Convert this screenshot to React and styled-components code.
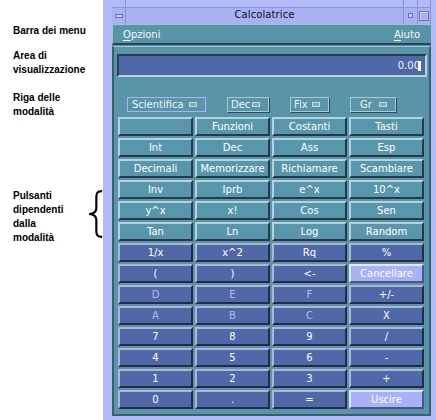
import React from "react";
import styled, { createGlobalStyle, css } from "styled-components";

const GlobalStyle = createGlobalStyle`
  body {
    margin: 0;
    background: #ffffff;
  }
`;

const Page = styled.div`
  display: flex;
  width: 436px;
  height: 420px;
  overflow: hidden;
  background: #ffffff;
`;

// annotations on the left
const Notes = styled.div`
  width: 103px;
  flex-shrink: 0;
  display: flex;
  flex-direction: column;
  padding-left: 13px;
  box-sizing: border-box;
  font-family: "Liberation Sans", Arial, sans-serif;
  font-weight: bold;
  font-size: 10px;
  line-height: 14px;
  color: #000;
`;

const Note = styled.div`
  margin-top: ${(props) => props.top}px;
`;

const BraceRow = styled.div`
  display: flex;
  align-items: flex-start;
  margin-top: ${(props) => props.top}px;
`;

const BraceText = styled.div`
  width: 75px;
  margin-top: 4px;
  flex-shrink: 0;
`;

// window
const Frame = styled.div`
  flex: 1;
  display: flex;
  flex-direction: column;
  background: #b2baf8;
  padding: 0 5px 4px 9px;
  font-family: "DejaVu Sans", Verdana, sans-serif;
  font-size: 10px;
`;

const TitleBar = styled.div`
  display: flex;
  height: 24px;
  background: linear-gradient(#b2baf8 0 7px, #8a92d4 7px 8px, #a9b1f2 8px);
`;

const TitleBox = styled.div`
  width: 14px;
  display: flex;
  align-items: center;
  justify-content: center;
  padding-top: 7px;
  box-sizing: border-box;
  border-left: ${(props) => (props.left ? "1px solid #8a92d4" : "none")};
  border-right: ${(props) => (props.right ? "1px solid #8a92d4" : "none")};
`;

const Dash = styled.span`
  width: 6px;
  height: 2px;
  border: 1px solid #6870b0;
  background: #c8ccff;
`;

const Dot = styled.span`
  width: 3px;
  height: 3px;
  border: 1px solid #6870b0;
  background: #c8ccff;
`;

const MaxSquare = styled.span`
  width: 8px;
  height: 8px;
  border: 1px solid #6870b0;
  box-shadow: inset 1px 1px 0 #d8dcff;
`;

const Title = styled.div`
  flex: 1;
  text-align: center;
  padding-top: 9px;
  color: #101020;
  font-size: 10px;
  letter-spacing: 0.1px;
`;

const Panel = styled.div`
  flex: 1;
  display: flex;
  flex-direction: column;
  background: #5994a9;
`;

const MenuBar = styled.div`
  height: 21px;
  display: flex;
  align-items: center;
  justify-content: space-between;
  padding: 0 11px 0 10px;
  box-sizing: border-box;
  border-top: 1px solid #9cc6d6;
  border-left: 1px solid #9cc6d6;
  border-bottom: 2px solid #2b4652;
  color: #f4f8fc;
`;

const MenuItem = styled.span`
  padding-top: 1px;
  & u {
    text-underline-offset: 2px;
  }
`;

const Work = styled.div`
  flex: 1;
  margin-top: 1px;
  display: flex;
  flex-direction: column;
  border-top: 1px solid #9cc6d6;
  border-left: 2px solid #35606f;
  border-right: 2px solid #35606f;
  border-bottom: 2px solid #35606f;
  padding: 7px 2px 0 3px;
`;

const Display = styled.div`
  height: 23px;
  box-sizing: border-box;
  background: #5068a8;
  border-style: solid;
  border-width: 2px;
  border-color: #2a3e4e #b6d4de #b6d4de #2a3e4e;
  display: flex;
  align-items: center;
  justify-content: flex-end;
  padding-right: 4px;
  color: #f4f6ff;
`;

const Cursor = styled.span`
  display: inline-block;
  width: 3px;
  height: 10px;
  background: #ffffff;
  margin-left: -2px;
`;

const ModeRow = styled.div`
  display: flex;
  margin-top: 20px;
  padding-left: 10px;
  gap: 21px;
`;

const Mode = styled.div`
  width: ${(props) => props.w}px;
  height: 15px;
  box-sizing: border-box;
  display: flex;
  align-items: center;
  justify-content: space-between;
  padding: 0 8px 0 ${(props) => props.pl || 3}px;
  color: #eef4f8;
  border: 1px solid ${(props) => (props.focus ? "#aab2fa" : "#a9c8d6")};
  box-shadow: ${(props) => (props.focus ? "none" : "1px 1px 0 #2f4a56")};
`;

const ModeMark = styled.span`
  width: 6px;
  height: 3px;
  border: 1px solid #c4dae4;
  background: #7ea8ba;
`;

const Keys = styled.div`
  display: grid;
  grid-template-columns: repeat(4, 75px);
  grid-auto-rows: 19px;
  column-gap: 2px;
  row-gap: 2px;
  margin-top: 5px;
  padding-left: 1px;
`;

const variants = {
  teal: css`
    background: #5a96ab;
    border-color: #b2d4e0 #253a46 #253a46 #b2d4e0;
  `,
  blue: css`
    background: #5068a8;
    border-color: #aeb6d8 #222c48 #222c48 #aeb6d8;
  `,
  lav: css`
    background: #a9b1f9;
    border-color: #e4e6ff #4c5488 #4c5488 #e4e6ff;
  `,
};

const Key = styled.button`
  appearance: none;
  margin: 0;
  padding: 0;
  box-sizing: border-box;
  border-style: solid;
  border-width: 2px;
  font-family: inherit;
  font-size: 10px;
  line-height: 12px;
  color: ${(props) => (props.dim ? "#b4bce4" : "#ffffff")};
  ${(props) => variants[props.kind]}
`;

const rows = [
  ["teal", ["", "Funzioni", "Costanti", "Tasti"]],
  ["teal", ["Int", "Dec", "Ass", "Esp"]],
  ["teal", ["Decimali", "Memorizzare", "Richiamare", "Scambiare"]],
  ["teal", ["Inv", "Iprb", "e^x", "10^x"]],
  ["teal", ["y^x", "x!", "Cos", "Sen"]],
  ["teal", ["Tan", "Ln", "Log", "Random"]],
  ["blue", ["1/x", "x^2", "Rq", "%"]],
  ["blue", ["(", ")", "<-", "Cancellare"]],
  ["blue", ["D", "E", "F", "+/-"]],
  ["blue", ["A", "B", "C", "X"]],
  ["blue", ["7", "8", "9", "/"]],
  ["blue", ["4", "5", "6", "-"]],
  ["blue", ["1", "2", "3", "+"]],
  ["blue", ["0", ".", "=", "Uscire"]],
];

const dimmed = ["A", "B", "C", "D", "E", "F"];
const light = ["Cancellare", "Uscire"];

const Brace = () => (
  <svg width="18" height="58" viewBox="0 0 18 58">
    <path
      d="M17 1.5 C11 1.5 10 4 10 9 L10 22 C10 26.5 7 28.5 1.5 29 C7 29.5 10 31.5 10 36 L10 49 C10 54 11 56.5 17 56.5"
      fill="none"
      stroke="#000"
      strokeWidth="2.6"
    />
  </svg>
);

export default function App() {
  return (
    <Page>
      <GlobalStyle />
      <Notes>
        <Note top={24}>Barra dei menu</Note>
        <Note top={11}>
          Area di
          <br />
          visualizzazione
        </Note>
        <Note top={14}>
          Riga delle
          <br />
          modalità
        </Note>
        <BraceRow top={66}>
          <BraceText>
            Pulsanti
            <br />
            dipendenti
            <br />
            dalla
            <br />
            modalità
          </BraceText>
          <Brace />
        </BraceRow>
      </Notes>

      <Frame>
        <TitleBar>
          <TitleBox right>
            <Dash />
          </TitleBox>
          <Title>Calcolatrice</Title>
          <TitleBox left>
            <Dot />
          </TitleBox>
          <TitleBox left right>
            <MaxSquare />
          </TitleBox>
        </TitleBar>
        <Panel>
          <MenuBar>
            <MenuItem>
              <u>O</u>pzioni
            </MenuItem>
            <MenuItem>
              <u>A</u>iuto
            </MenuItem>
          </MenuBar>
          <Work>
            <Display>
              0.00
              <Cursor />
            </Display>
            <ModeRow>
              <Mode w={79} pl={4} focus>
                Scientifica <ModeMark />
              </Mode>
              <Mode w={42}>
                Dec <ModeMark />
              </Mode>
              <Mode w={39}>
                Fix <ModeMark />
              </Mode>
              <Mode w={46} pl={9}>
                Gr <ModeMark />
              </Mode>
            </ModeRow>
            <Keys>
              {rows.map(([kind, labels], r) =>
                labels.map((label, c) => (
                  <Key
                    key={r + "-" + c}
                    kind={light.includes(label) ? "lav" : kind}
                    dim={dimmed.includes(label)}
                  >
                    {label}
                  </Key>
                ))
              )}
            </Keys>
          </Work>
        </Panel>
      </Frame>
    </Page>
  );
}
